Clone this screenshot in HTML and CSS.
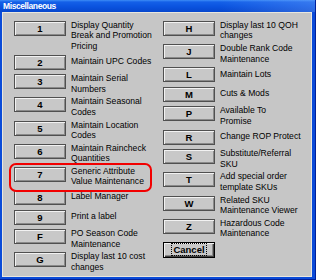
FILE: index.html
```html
<!DOCTYPE html>
<html lang="en">
<head>
    <meta charset="UTF-8">
    <title>Miscellaneous</title>
    <link rel="stylesheet" href="styles.css">
</head>
<body>
    <div class="window">
        <div class="titlebar">Miscellaneous</div>
        <div class="client">
            <div class="column">
                <div class="row"><button class="key">1</button><div class="label"><span>Display Quantity<br>Break and Promotion<br>Pricing</span></div></div>
                <div class="row"><button class="key">2</button><div class="label"><span>Maintain UPC Codes</span></div></div>
                <div class="row"><button class="key">3</button><div class="label"><span>Maintain Serial<br>Numbers</span></div></div>
                <div class="row"><button class="key">4</button><div class="label"><span>Maintain Seasonal<br>Codes</span></div></div>
                <div class="row"><button class="key">5</button><div class="label"><span>Maintain Location<br>Codes</span></div></div>
                <div class="row"><button class="key">6</button><div class="label"><span>Maintain Raincheck<br>Quantities</span></div></div>
                <div class="row highlight"><button class="key">7</button><div class="label"><span>Generic Attribute<br>Value Maintenance</span></div></div>
                <div class="row"><button class="key">8</button><div class="label"><span>Label Manager</span></div></div>
                <div class="row"><button class="key">9</button><div class="label"><span>Print a label</span></div></div>
                <div class="row"><button class="key">F</button><div class="label"><span>PO Season Code<br>Maintenance</span></div></div>
                <div class="row"><button class="key">G</button><div class="label"><span>Display last 10 cost<br>changes</span></div></div>
            </div>
            <div class="column">
                <div class="row"><button class="key">H</button><div class="label"><span>Display last 10 QOH<br>changes</span></div></div>
                <div class="row"><button class="key">J</button><div class="label"><span>Double Rank Code<br>Maintenance</span></div></div>
                <div class="row"><button class="key">L</button><div class="label"><span>Maintain Lots</span></div></div>
                <div class="row"><button class="key">M</button><div class="label"><span>Cuts &amp; Mods</span></div></div>
                <div class="row"><button class="key">P</button><div class="label"><span>Available To<br>Promise</span></div></div>
                <div class="row"><button class="key">R</button><div class="label"><span>Change ROP Protect</span></div></div>
                <div class="row"><button class="key">S</button><div class="label"><span>Substitute/Referral<br>SKU</span></div></div>
                <div class="row"><button class="key">T</button><div class="label"><span>Add special order<br>template SKUs</span></div></div>
                <div class="row"><button class="key">W</button><div class="label"><span>Related SKU<br>Maintenance Viewer</span></div></div>
                <div class="row"><button class="key">Z</button><div class="label"><span>Hazardous Code<br>Maintenance</span></div></div>
                <div class="row"><button class="key default"><span class="focus">Cancel</span></button></div>
            </div>
        </div>
    </div>
</body>
</html>
```

FILE: styles.css
```css
body {
    margin: 0;
    font-family: "Liberation Sans", Arial, sans-serif;
}
.window {
    width: 316px;
    height: 280px;
    box-sizing: border-box;
    display: flex;
    flex-direction: column;
    background-color: #0b4bd8;
    border-right: 1px solid #00209a;
    border-bottom: 1px solid #00209a;
}
.titlebar {
    height: 12px;
    padding-left: 3px;
    color: white;
    font-weight: bold;
    font-size: 8.5px;
    line-height: 13px;
    letter-spacing: -0.4px;
    background:
        linear-gradient(to right, rgba(255,255,255,0) 70%, rgba(120,170,255,0.35) 100%),
        linear-gradient(to bottom, #3d8df6 0, #1460e8 2px, #0a52de 7px, #0747cc 12px);
}
.client {
    flex: 1;
    margin: 0 3px 4px 2px;
    padding: 8px 0 0 11px;
    background-color: #c6c6c6;
    border: 1px solid #e9e7de;
    display: grid;
    grid-template-columns: 149px 1fr;
}
.row {
    display: flex;
    align-items: flex-start;
    gap: 5px;
    min-height: 19.5px;
}
.key {
    width: 52px;
    height: 15px;
    box-sizing: border-box;
    padding: 0;
    flex-shrink: 0;
    background-color: #c8c8c8;
    border: 1px solid #505050;
    box-shadow: inset 1px 1px #f2f2f2, inset -1px -1px #8a8a8a;
    font-family: "Liberation Sans", Arial, sans-serif;
    font-weight: bold;
    font-size: 9.5px;
    color: #000;
}
.key.default {
    height: 16px;
    border-color: #000;
    box-shadow: inset 1px 1px #f2f2f2, inset -1px -1px #404040, inset -2px -2px #8a8a8a;
}
.focus {
    outline: 1px dotted #000;
    padding: 0 1px;
}
.label {
    display: flex;
    align-items: center;
    min-height: 15px;
    margin-top: -1px;
    padding-bottom: 3.4px;
    font-size: 8.6px;
    line-height: 10.4px;
    white-space: nowrap;
    color: #000;
}
.highlight {
    position: relative;
}
.highlight::after {
    content: "";
    position: absolute;
    left: -5px;
    top: -4px;
    width: 143px;
    height: 29px;
    box-sizing: border-box;
    border: 2.5px solid #f20000;
    border-radius: 7px;
}
```
